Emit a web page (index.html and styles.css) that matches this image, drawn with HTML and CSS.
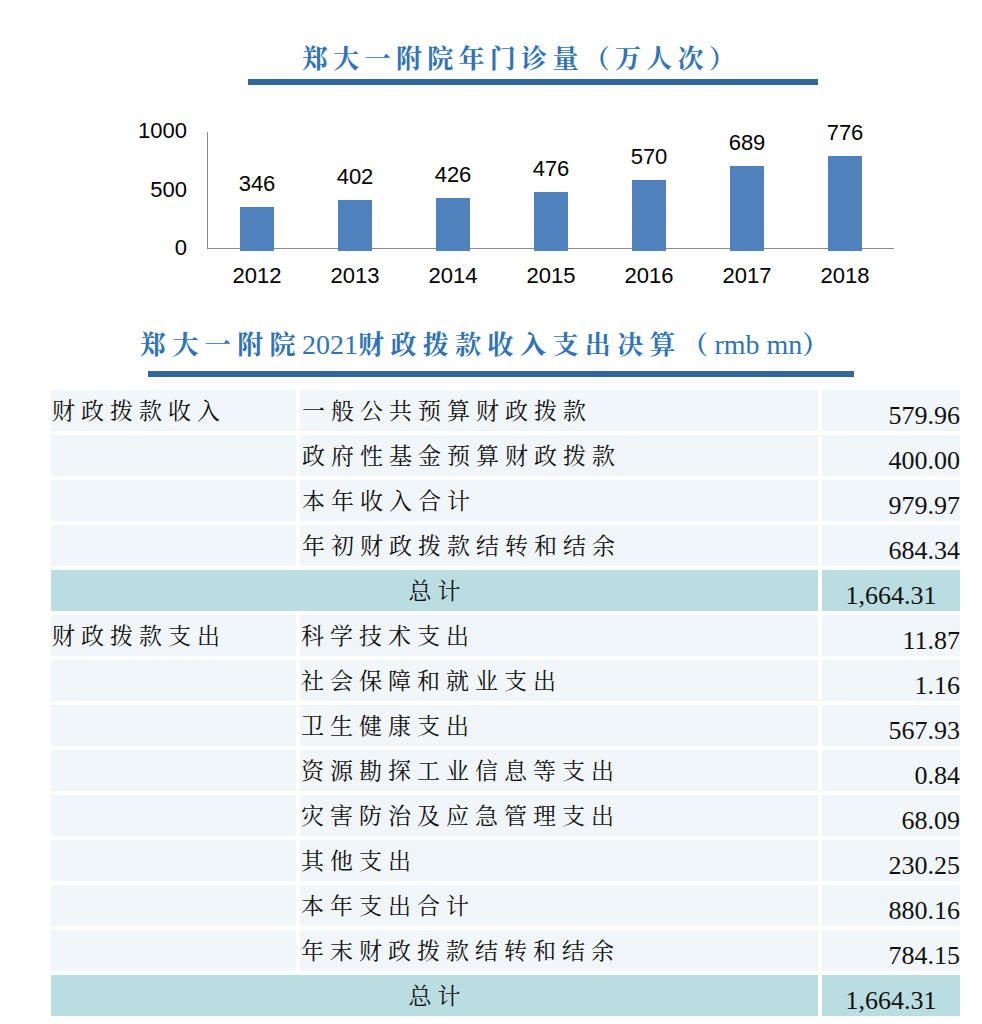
FILE: index.html
```html
<!DOCTYPE html>
<html lang="zh">
<head>
<meta charset="utf-8">
<title>郑大一附院</title>
<link rel="stylesheet" href="styles.css">
</head>
<body>
<div class="page">
  <h1 class="title t1">郑大一附院年门诊量（万人次）</h1>
  <div class="rule r1"></div>

  <div class="chart">
    <div class="yaxis"><span>1000</span><span>500</span><span>0</span></div>
    <div class="plot">
      <div class="cat"><span class="val">346</span><div class="bar" style="height:44px"></div></div>
      <div class="cat"><span class="val">402</span><div class="bar" style="height:50.7px"></div></div>
      <div class="cat"><span class="val">426</span><div class="bar" style="height:53.5px"></div></div>
      <div class="cat"><span class="val">476</span><div class="bar" style="height:59.5px"></div></div>
      <div class="cat"><span class="val">570</span><div class="bar" style="height:70.6px"></div></div>
      <div class="cat"><span class="val">689</span><div class="bar" style="height:84.7px"></div></div>
      <div class="cat"><span class="val">776</span><div class="bar" style="height:95px"></div></div>
    </div>
  </div>
  <div class="xaxis">
    <span>2012</span><span>2013</span><span>2014</span><span>2015</span><span>2016</span><span>2017</span><span>2018</span>
  </div>

  <h2 class="title t2">郑大一附院<span class="latin">2021</span>财政拨款收入支出决算（<span class="latin">rmb mn</span>）</h2>
  <div class="rule r2"></div>

  <div class="table">
    <div class="cell lbl">财政拨款收入</div><div class="cell lbl">一般公共预算财政拨款</div><div class="cell num">579.96</div>
    <div class="cell lbl"></div><div class="cell lbl">政府性基金预算财政拨款</div><div class="cell num">400.00</div>
    <div class="cell lbl"></div><div class="cell lbl">本年收入合计</div><div class="cell num">979.97</div>
    <div class="cell lbl"></div><div class="cell lbl">年初财政拨款结转和结余</div><div class="cell num">684.34</div>
    <div class="cell total span2">总计</div><div class="cell total tnum">1,664.31</div>

    <div class="cell lbl">财政拨款支出</div><div class="cell lbl">科学技术支出</div><div class="cell num">11.87</div>
    <div class="cell lbl"></div><div class="cell lbl">社会保障和就业支出</div><div class="cell num">1.16</div>
    <div class="cell lbl"></div><div class="cell lbl">卫生健康支出</div><div class="cell num">567.93</div>
    <div class="cell lbl"></div><div class="cell lbl">资源勘探工业信息等支出</div><div class="cell num">0.84</div>
    <div class="cell lbl"></div><div class="cell lbl">灾害防治及应急管理支出</div><div class="cell num">68.09</div>
    <div class="cell lbl"></div><div class="cell lbl">其他支出</div><div class="cell num">230.25</div>
    <div class="cell lbl"></div><div class="cell lbl">本年支出合计</div><div class="cell num">880.16</div>
    <div class="cell lbl"></div><div class="cell lbl">年末财政拨款结转和结余</div><div class="cell num">784.15</div>
    <div class="cell total span2">总计</div><div class="cell total tnum">1,664.31</div>
  </div>
</div>
</body>
</html>
```

FILE: styles.css
```css
* { box-sizing: border-box; }
html, body { margin: 0; padding: 0; background: #ffffff; }
body { width: 982px; height: 1024px; overflow: hidden; }

.page { display: flex; flex-direction: column; align-items: flex-start; }

.title {
  margin: 0;
  font-family: "Noto Serif CJK SC", "Noto Sans CJK SC", sans-serif;
  font-weight: 700;
  color: #3174b6;
  white-space: nowrap;
}
.t1 {
  margin: 42px 0 0 302px;
  font-size: 26px;
  line-height: 30px;
  letter-spacing: 5.3px;
}
.t2 {
  margin: 39px 0 0 140px;
  font-size: 26px;
  line-height: 32px;
  letter-spacing: 6.4px;
}
.latin {
  font-family: "Liberation Serif", serif;
  font-weight: 400;
  font-size: 28px;
  letter-spacing: 0;
}

.rule { height: 6px; background: #34679b; }
.r1 { margin: 7px 0 0 248px; width: 570px; }
.r2 { margin: 10px 0 0 148px; width: 706px; }

/* chart */
.chart {
  display: flex;
  margin: 35px 0 0 130px;
  font-family: "Liberation Sans", Arial, sans-serif;
  font-size: 22px;
  color: #000;
}
.yaxis {
  width: 57px;
  height: 139px;
  margin-right: 20px;
  display: flex;
  flex-direction: column;
  justify-content: space-between;
  align-items: flex-end;
  line-height: 22px;
}
.plot {
  margin-top: 12px;
  height: 117px;
  display: flex;
  border-left: 1px solid #8c8c8c;
  border-bottom: 1px solid #8c8c8c;
}
.cat {
  width: 98px;
  display: flex;
  flex-direction: column;
  align-items: center;
  justify-content: flex-end;
  margin-bottom: -3px;
}
.val { flex-shrink: 0; line-height: 22px; margin-bottom: 12px; }
.bar { flex-shrink: 0; width: 34px; background: #4f81bd; }

.xaxis {
  display: flex;
  margin: 5px 0 0 208px;
  font-family: "Liberation Sans", Arial, sans-serif;
  font-size: 22px;
  line-height: 24px;
  color: #000;
}
.xaxis span { width: 98px; text-align: center; }

/* table */
.table {
  margin: 13px 0 0 51px;
  display: grid;
  grid-template-columns: 245px 518px 138px;
  grid-auto-rows: 41px;
  gap: 4px;
}
.cell {
  background: #f1f6fa;
  display: flex;
  align-items: center;
  color: #111;
  white-space: nowrap;
}
.lbl {
  font-family: "Noto Serif CJK SC", "Noto Sans CJK SC", serif;
  font-size: 23px;
  letter-spacing: 6px;
  padding-left: 1px;
  padding-bottom: 2px;
}
.lbl:nth-child(3n+2) { padding-left: 2px; }
.num {
  justify-content: flex-end;
  align-items: flex-end;
  font-family: "Liberation Serif", "Times New Roman", serif;
  font-size: 26px;
  line-height: 26px;
  padding-bottom: 2px;
}
.total { background: #b9dde0; }
.span2 {
  grid-column: span 2;
  justify-content: center;
  font-family: "Noto Serif CJK SC", "Noto Sans CJK SC", serif;
  font-size: 23px;
  letter-spacing: 6px;
  padding-left: 6px;
  padding-bottom: 2px;
}
.tnum {
  justify-content: center;
  align-items: flex-end;
  font-family: "Liberation Serif", "Times New Roman", serif;
  font-size: 26px;
  line-height: 26px;
  padding-bottom: 2px;
}
```
